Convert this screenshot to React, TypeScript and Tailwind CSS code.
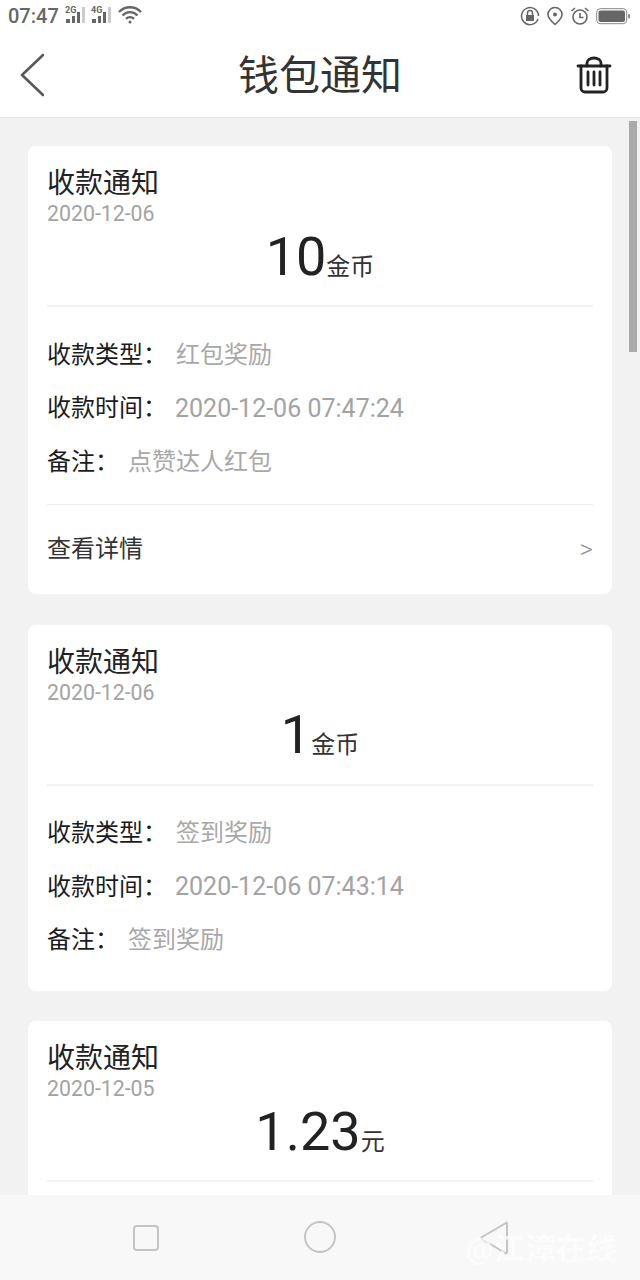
import React from "react";

function Row({ label, value, latin }: { label: string; value: string; latin?: boolean }) {
  return (
    <div className="flex h-[53.5px] items-center text-[24px]">
      <span className="text-[#1c1c1c]">{label}</span>
      <span className={latin ? "ml-[8px] text-[25px] text-[#a3a3a3]" : "ml-[9px] text-[#a8a8a8]"}>{value}</span>
    </div>
  );
}

function Head({ date, amount, unit }: { date: string; amount: string; unit: string }) {
  return (
    <>
      <div className="pt-[20px] text-[28px] leading-[36px] text-[#222222]">收款通知</div>
      <div className="text-[21.3px] leading-[24px] text-[#a3a3a3]">{date}</div>
      <div className="flex h-[79px] items-center justify-center pb-[18px]">
        <span className="text-[54px] leading-none text-[#222222]">{amount}</span>
        <span className="mt-[20px] text-[24px] leading-none text-[#333333]">{unit}</span>
      </div>
      <div className="h-[2px] bg-[#f2f2f2]" />
    </>
  );
}

export default function App() {
  return (
    <div className="relative flex h-[1280px] w-[640px] flex-col overflow-hidden bg-[#f2f2f2] font-['Roboto','Noto_Sans_CJK_SC',sans-serif]">
      <div className="flex h-[118px] shrink-0 flex-col border-b border-[#e6e6e6] bg-white">
        <div className="flex h-[32px] items-center justify-between pl-[8px] pr-[10px]">
          <div className="flex items-center gap-[4px] text-[#666666]">
            <span className="text-[20px] font-medium leading-none">07:47</span>
            <svg width="22" height="20" viewBox="0 0 22 20" className="-mt-[2px] ml-[2px]">
              <text x="0" y="8" fontSize="9" fontWeight="700" fill="#666">2G</text>
              <rect x="1" y="14" width="4" height="4" fill="#666" /><rect x="7" y="11" width="3" height="7" fill="#666" /><rect x="12" y="7" width="3" height="11" fill="#666" /><rect x="17" y="2" width="3" height="16" fill="#ccc" />
            </svg>
            <svg width="24" height="20" viewBox="0 0 24 20" className="-mt-[2px]">
              <text x="0" y="8" fontSize="9" fontWeight="700" fill="#666">4G</text>
              <rect x="1" y="14" width="4" height="4" fill="#666" /><rect x="7" y="11" width="3" height="7" fill="#666" /><rect x="12" y="7" width="3" height="11" fill="#666" /><rect x="17" y="2" width="3" height="16" fill="#ccc" />
            </svg>
            <svg width="24" height="20" viewBox="0 0 24 20" fill="none" stroke="#666" strokeWidth="2.400" className="-mt-[2px] -ml-[1px]">
              <path d="M1 7a15 15 0 0 1 22 0" /><path d="M4.500 10.500a10 10 0 0 1 15 0" /><path d="M8 13.800a6 6 0 0 1 8 0" /><circle cx="12" cy="17" r="1.500" fill="#666" stroke="none" />
            </svg>
          </div>
          <div className="flex items-center gap-[4px]">
            <svg width="20" height="20" viewBox="0 0 20 20" fill="none" stroke="#666" strokeWidth="1.500">
              <path d="M18 13a8.500 8.500 0 1 1 .5-3" /><rect x="6" y="9" width="8" height="6" fill="#666" stroke="none" /><path d="M7.500 9V7a2.500 2.500 0 0 1 5 0v2" />
            </svg>
            <svg width="18" height="20" viewBox="0 0 18 20" fill="none" stroke="#666" strokeWidth="1.600" className="ml-[2px]">
              <path d="M9 18.500 C5 15 2 12 2 8.500a7 7 0 0 1 14 0c0 3.500-3 6.500-7 10z" /><circle cx="9" cy="8.500" r="2" fill="#666" stroke="none" />
            </svg>
            <svg width="20" height="20" viewBox="0 0 20 20" fill="none" stroke="#666" strokeWidth="1.600" className="ml-[2px]">
              <circle cx="10" cy="11" r="7" /><path d="M10 7v4.500h3.500" /><path d="M1.500 5 5 2M18.500 5 15 2" />
            </svg>
            <svg width="34" height="20" viewBox="0 0 34 20" className="ml-[2px]">
              <rect x="0.700" y="2.700" width="30" height="15" rx="3.500" fill="none" stroke="#888" strokeWidth="1" />
              <rect x="2.500" y="4.500" width="26.500" height="11.500" rx="2" fill="#666" />
              <rect x="32" y="8" width="2" height="4.500" rx="1" fill="#888" />
            </svg>
          </div>
        </div>
        <div className="relative flex flex-1 items-center justify-between pl-[20px] pr-[28px]">
          <svg width="24" height="44" viewBox="0 0 24 44" fill="none" stroke="#595959" strokeWidth="2.600" strokeLinecap="round" strokeLinejoin="round">
            <path d="M23 2 2 22l21 20" />
          </svg>
          <span className="absolute inset-x-0 top-[24px] text-center text-[41px] leading-none text-[#333333]">钱包通知</span>
          <svg width="36" height="38" viewBox="0 0 36 38" fill="none" stroke="#222222" strokeWidth="2.800" strokeLinecap="round" strokeLinejoin="round">
            <path d="M2 10h32" /><path d="M11 10V7a7 5 0 0 1 14 0v3" /><path d="M5 10v22a4 4 0 0 0 4 4h18a4 4 0 0 0 4-4V10" /><path d="M12 16v13M18 16v13M24 16v13" />
          </svg>
        </div>
      </div>
      <div className="relative flex flex-1 flex-col overflow-hidden px-[28px] pt-[28px]">
        <div className="mb-[31px] shrink-0 rounded-[8px] bg-white px-[19px]">
          <Head date="2020-12-06" amount="10" unit="金币" />
          <div className="pt-[21px] pb-[15px]">
            <Row label="收款类型：" value="红包奖励" />
            <Row label="收款时间：" value="2020-12-06 07:47:24" latin />
            <Row label="备注：" value="点赞达人红包" />
          </div>
          <div className="h-[1px] bg-[#ececec]" />
          <div className="flex h-[89px] items-center justify-between text-[24px] text-[#333333]">
            <span>查看详情</span>
            <span className="text-[26px] font-light text-[#8f8f8f]">&gt;</span>
          </div>
        </div>
        <div className="mb-[30px] shrink-0 rounded-[8px] bg-white px-[19px]">
          <Head date="2020-12-06" amount="1" unit="金币" />
          <div className="pt-[21px] pb-[24px]">
            <Row label="收款类型：" value="签到奖励" />
            <Row label="收款时间：" value="2020-12-06 07:43:14" latin />
            <Row label="备注：" value="签到奖励" />
          </div>
        </div>
        <div className="h-[200px] shrink-0 rounded-[8px] bg-white px-[19px]">
          <Head date="2020-12-05" amount="1.23" unit="元" />
        </div>
        <div className="absolute right-[3px] top-[3px] h-[231px] w-[8px] bg-[#aaaaaa]" />
      </div>
      <div className="absolute inset-x-0 bottom-0 h-[85px] bg-[#f8f8f8]">
        <span className="absolute left-[133px] top-[30px] h-[26px] w-[26px] rounded-[4px] border-2 border-[#c4c4c4]" />
        <span className="absolute left-[304px] top-[26px] h-[32px] w-[32px] rounded-full border-2 border-[#c4c4c4]" />
        <svg className="absolute left-[479px] top-[25px]" width="30" height="36" viewBox="0 0 30 36" fill="none" stroke="#c4c4c4" strokeWidth="2" strokeLinejoin="round" strokeLinecap="round">
          <path d="M27 3Q28 2 28 4V32Q28 34 26 33L3 19Q2 18 3 17z" />
        </svg>
        <span className="absolute left-[466px] top-[39px] whitespace-nowrap text-[30px] font-bold leading-none tracking-[1px] text-white opacity-70">@江漳在线</span>
      </div>
    </div>
  );
}
